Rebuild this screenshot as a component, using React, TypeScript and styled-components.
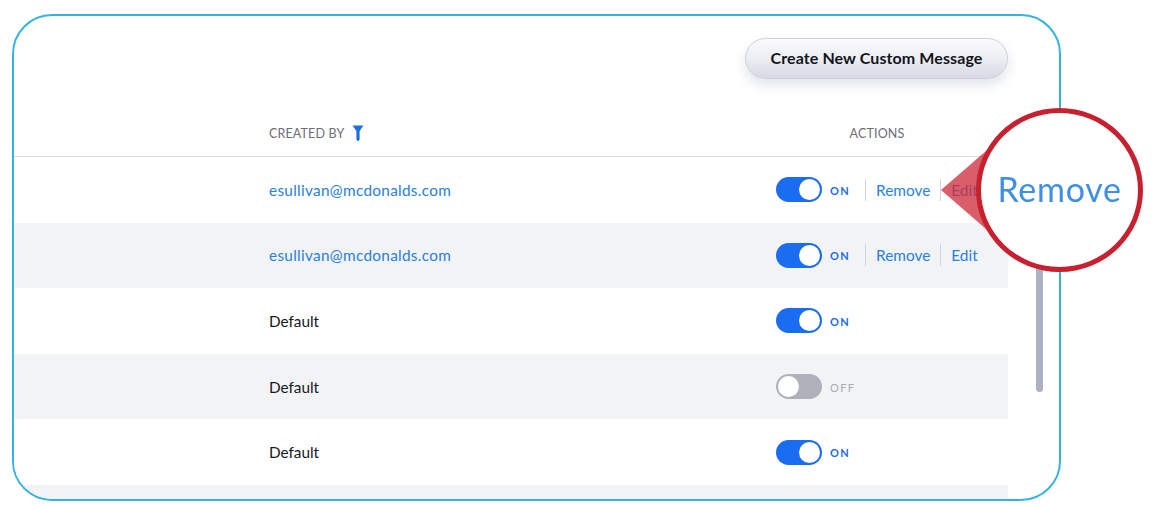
import React from "react";
import styled, { createGlobalStyle } from "styled-components";

interface MessageRow {
  id: number;
  createdBy: string;
  on: boolean;
  editable: boolean;
}

const rows: MessageRow[] = [
  { id: 1, createdBy: "esullivan@mcdonalds.com", on: true, editable: true },
  { id: 2, createdBy: "esullivan@mcdonalds.com", on: true, editable: true },
  { id: 3, createdBy: "Default", on: true, editable: false },
  { id: 4, createdBy: "Default", on: false, editable: false },
  { id: 5, createdBy: "Default", on: true, editable: false },
  { id: 6, createdBy: "", on: true, editable: false },
];

const App = () => {
  return (
    <>
      <GlobalStyle />
      <Page>
        <Card>
          <Toolbar>
            <CreateBtn>Create New Custom Message</CreateBtn>
          </Toolbar>
          <HeaderRow>
            <HeaderCell>
              CREATED BY
              <svg width="12" height="17" viewBox="0 0 12 17">
                <path d="M0.5 0.5H11.5L7.6 6V14.5L6 16.5L4.4 14.5V6Z" fill="#1a6fe0" />
              </svg>
            </HeaderCell>
            <ActionsHead>ACTIONS</ActionsHead>
          </HeaderRow>
          <Body>
            <Rows>
              {rows.map((row, i) => (
                <Row key={row.id} $striped={i % 2 === 1}>
                  {row.createdBy && (
                    <>
                      <Creator $link={row.editable}>{row.createdBy}</Creator>
                      <Actions>
                        <Switch $on={row.on}>
                          <Knob />
                        </Switch>
                        <SwitchLabel $on={row.on}>{row.on ? "ON" : "OFF"}</SwitchLabel>
                        {row.editable && (
                          <>
                            <ActionLink>Remove</ActionLink>
                            <ActionLink>Edit</ActionLink>
                          </>
                        )}
                      </Actions>
                    </>
                  )}
                </Row>
              ))}
            </Rows>
            <Gutter>
              <Thumb />
            </Gutter>
          </Body>
        </Card>
        <Pointer />
        <Magnifier>
          <MagnifiedText>Remove</MagnifiedText>
        </Magnifier>
      </Page>
    </>
  );
};

export default App;

const GlobalStyle = createGlobalStyle`
  body {
    margin: 0;
    background: #fff;
    font-family: Lato, "Noto Sans", sans-serif;
  }
`;

const Page = styled.div`
  position: relative;
  width: 1155px;
  height: 508px;
  padding: 14px 0 0 12px;
  box-sizing: border-box;
  overflow: hidden;
`;

const Card = styled.div`
  width: 1049px;
  height: 487px;
  box-sizing: border-box;
  border: 2px solid #35b3e0;
  border-radius: 40px;
  overflow: hidden;
  background: #fff;
`;

const Toolbar = styled.div`
  display: flex;
  justify-content: flex-end;
  height: 90px;
  padding: 22px 51px 0 0;
  box-sizing: border-box;
`;

const CreateBtn = styled.button`
  width: 263px;
  height: 41px;
  border: 1px solid #ccd0da;
  border-radius: 21px;
  background: linear-gradient(180deg, #fbfbfd 0%, #eceef3 50%, #d6d9e4 100%);
  box-shadow: 0 6px 12px rgba(120, 130, 160, 0.22);
  color: #12141c;
  font-family: inherit;
  font-size: 16px;
  font-weight: 700;
  letter-spacing: 0.1px;
  padding: 0 0 2px;
`;

const HeaderRow = styled.div`
  display: grid;
  grid-template-columns: 255px 507px 202px;
  align-items: center;
  height: 51px;
  padding-top: 4px;
  box-sizing: border-box;
  border-bottom: 1px solid #dcdde0;
`;

const HeaderCell = styled.div`
  grid-column: 2;
  display: flex;
  align-items: center;
  gap: 8px;
  color: #6b6e75;
  font-size: 12.5px;
  letter-spacing: 0.15px;
`;

const ActionsHead = styled.div`
  grid-column: 3;
  color: #6b6e75;
  font-size: 12.5px;
  letter-spacing: 0.15px;
  text-align: center;
`;

const Body = styled.div`
  display: flex;
`;

const Rows = styled.div`
  width: 994px;
  flex-shrink: 0;
`;

const Row = styled.div<{ $striped: boolean }>`
  display: grid;
  grid-template-columns: 255px 507px 1fr;
  align-items: center;
  height: 65.6px;
  background: ${(p) => (p.$striped ? "#f2f3f5" : "#fff")};
`;

const Creator = styled.div<{ $link: boolean }>`
  grid-column: 2;
  color: ${(p) => (p.$link ? "#2a80dc" : "#17181c")};
  font-size: 15.3px;
  letter-spacing: ${(p) => (p.$link ? "0.32px" : "0")};
`;

const Actions = styled.div`
  grid-column: 3;
  display: flex;
  align-items: center;
`;

const Switch = styled.div<{ $on: boolean }>`
  display: flex;
  justify-content: ${(p) => (p.$on ? "flex-end" : "flex-start")};
  width: 46px;
  height: 25px;
  padding: 2px;
  box-sizing: border-box;
  border-radius: 13px;
  background: ${(p) => (p.$on ? "#1a6cf0" : "#aeb1b9")};
`;

const Knob = styled.div`
  width: 21px;
  height: 21px;
  border-radius: 50%;
  background: #fff;
`;

const SwitchLabel = styled.span<{ $on: boolean }>`
  width: 35px;
  margin-left: 8px;
  padding-top: 1px;
  color: ${(p) => (p.$on ? "#1f6be0" : "#a9abb1")};
  font-size: 11px;
  font-weight: ${(p) => (p.$on ? 700 : 400)};
  letter-spacing: 1.4px;
`;

const ActionLink = styled.a`
  display: block;
  padding: 2px 10px 2px 10px;
  border-left: 1px solid #d4d5d8;
  color: #2a80dc;
  font-size: 15.4px;
  line-height: 18px;
`;

const Gutter = styled.div`
  flex: 1;
  padding-left: 28px;
`;

const Thumb = styled.div`
  width: 7px;
  height: 235px;
  border-radius: 0 0 4px 4px;
  background: #aeb0c2;
`;

const Pointer = styled.div`
  position: absolute;
  left: 941px;
  top: 138px;
  width: 60px;
  height: 104px;
  clip-path: polygon(0 50%, 100% 0, 100% 100%);
  background: rgba(205, 40, 55, 0.75);
`;

const Magnifier = styled.div`
  position: absolute;
  left: 976px;
  top: 108px;
  display: flex;
  align-items: center;
  justify-content: center;
  width: 167px;
  height: 164px;
  box-sizing: border-box;
  border: 5px solid #c7202e;
  border-radius: 50%;
  background: #fff;
`;

const MagnifiedText = styled.span`
  margin-top: -3px;
  color: #3f8fe6;
  font-size: 34px;
  letter-spacing: 0.7px;
  filter: blur(0.7px);
`;
